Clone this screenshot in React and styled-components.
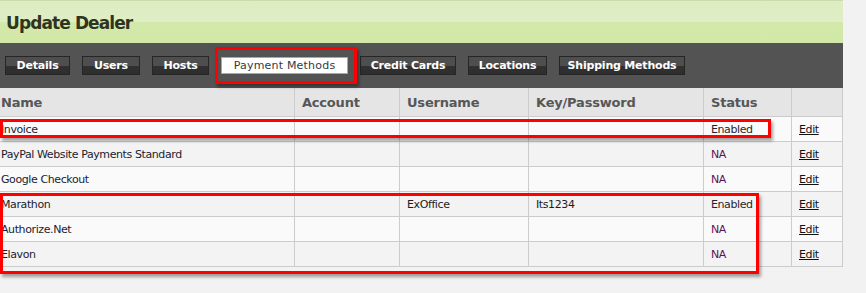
import React from "react";
import styled, { createGlobalStyle } from "styled-components";

const Global = createGlobalStyle`
  html, body { margin: 0; padding: 0; background: #f4f4f4; }
  body { font-family: "DejaVu Sans", Verdana, sans-serif; }
`;

const Page = styled.div`
  position: relative;
  width: 866px;
  height: 293px;
  background: #f2f2f2;
  overflow: hidden;
`;

const Panel = styled.div`
  width: 843px;
`;

const Header = styled.div`
  height: 43px;
  box-sizing: border-box;
  border-top: 1px solid #cadcae;
  background: linear-gradient(to bottom, #ddedc1 0, #dfeec5 21px, #d3e9aa 21px, #d2e8a9 100%);
  display: flex;
  align-items: center;
  padding: 2px 0 0 6px;
`;

const Title = styled.h1`
  margin: 0;
  font-size: 17px;
  font-weight: bold;
  color: #2f331f;
  letter-spacing: -0.9px;
`;

const TabBar = styled.div`
  height: 45px;
  background: #535353;
  display: flex;
  align-items: flex-start;
  gap: 12px;
  padding: 13px 0 0 5px;
  box-sizing: border-box;
`;

const Tab = styled.div`
  box-sizing: border-box;
  width: ${(p) => p.$w}px;
  display: flex;
  align-items: center;
  justify-content: center;
  font-size: 11px;
  font-weight: ${(p) => (p.$active ? "normal" : "bold")};
  color: ${(p) => (p.$active ? "#333a44" : "#ffffff")};
  border: 1px solid ${(p) => (p.$active ? "#a8a8a8" : "#262626")};
  background: ${(p) =>
    p.$active
      ? "#ffffff"
      : "linear-gradient(to bottom, #4e4e4e 0, #4e4e4e 50%, #313131 50%, #2e2e2e 100%)"};
  margin-top: ${(p) => (p.$active ? "1px" : "0")};
  height: ${(p) => (p.$active ? "17px" : "19px")};
  letter-spacing: ${(p) => (p.$active ? "0.2px" : "-0.2px")};
`;

const cols = "295px 105px 129px 175px 88px 51px";

const Row = styled.div`
  display: grid;
  grid-template-columns: ${cols};
  height: ${(p) => (p.$head ? "29px" : "25px")};
  background: ${(p) => (p.$head ? "#e5e5e5" : p.$alt ? "#f3f3f3" : "#fafafa")};
`;

const Cell = styled.div`
  box-sizing: border-box;
  border-right: 1px solid #cccccc;
  border-bottom: 1px solid #cccccc;
  display: flex;
  align-items: center;
  padding-left: ${(p) => (p.$first ? "1px" : "7px")};
  font-size: ${(p) => (p.$head ? "13px" : "11px")};
  font-weight: ${(p) => (p.$head ? "bold" : "normal")};
  letter-spacing: ${(p) => (p.$head ? "-0.2px" : "-0.4px")};
  color: ${(p) => (p.$head ? "#575757" : p.$tone || "#1c1c2e")};
  white-space: nowrap;
`;

const EditLink = styled.a`
  color: #111111;
  text-decoration: underline;
  font-size: 11px;
`;

const Marker = styled.div`
  position: absolute;
  box-sizing: border-box;
  border: 3px solid #ff0000;
  box-shadow: 2px 3px 3px rgba(0, 0, 0, 0.35);
  pointer-events: none;
  left: ${(p) => p.$x}px;
  top: ${(p) => p.$y}px;
  width: ${(p) => p.$w}px;
  height: ${(p) => p.$h}px;
`;

const tabs = [
  { label: "Details", w: 65 },
  { label: "Users", w: 58 },
  { label: "Hosts", w: 57 },
  { label: "Payment Methods", w: 127, active: true },
  { label: "Credit Cards", w: 96 },
  { label: "Locations", w: 79 },
  { label: "Shipping Methods", w: 126 },
];

const rows = [
  { name: "Invoice", user: "", key: "", status: "Enabled" },
  { name: "PayPal Website Payments Standard", user: "", key: "", status: "NA" },
  { name: "Google Checkout", user: "", key: "", status: "NA" },
  { name: "Marathon", user: "ExOffice", key: "Its1234", status: "Enabled" },
  { name: "Authorize.Net", user: "", key: "", status: "NA" },
  { name: "Elavon", user: "", key: "", status: "NA" },
];

export default function App() {
  return (
    <Page>
      <Global />
      <Panel>
        <Header>
          <Title>Update Dealer</Title>
        </Header>
        <TabBar>
          {tabs.map((t) => (
            <Tab key={t.label} $w={t.w} $active={t.active}>
              {t.label}
            </Tab>
          ))}
        </TabBar>
        <Row $head>
          <Cell $head $first>Name</Cell>
          <Cell $head>Account</Cell>
          <Cell $head>Username</Cell>
          <Cell $head>Key/Password</Cell>
          <Cell $head>Status</Cell>
          <Cell $head></Cell>
        </Row>
        {rows.map((r, i) => (
          <Row key={r.name} $alt={i % 2 === 1}>
            <Cell $first>{r.name}</Cell>
            <Cell></Cell>
            <Cell $tone="#1c1c1c">{r.user}</Cell>
            <Cell $tone="#1c1c1c">{r.key}</Cell>
            <Cell $tone={r.status === "NA" ? "#5a1458" : "#2a1f2e"}>{r.status}</Cell>
            <Cell>
              <EditLink href="#">Edit</EditLink>
            </Cell>
          </Row>
        ))}
      </Panel>
      <Marker $x={215} $y={47} $w={142} $h={37} />
      <Marker $x={0} $y={119} $w={771} $h={19} />
      <Marker $x={0} $y={193} $w={759} $h={81} />
    </Page>
  );
}
